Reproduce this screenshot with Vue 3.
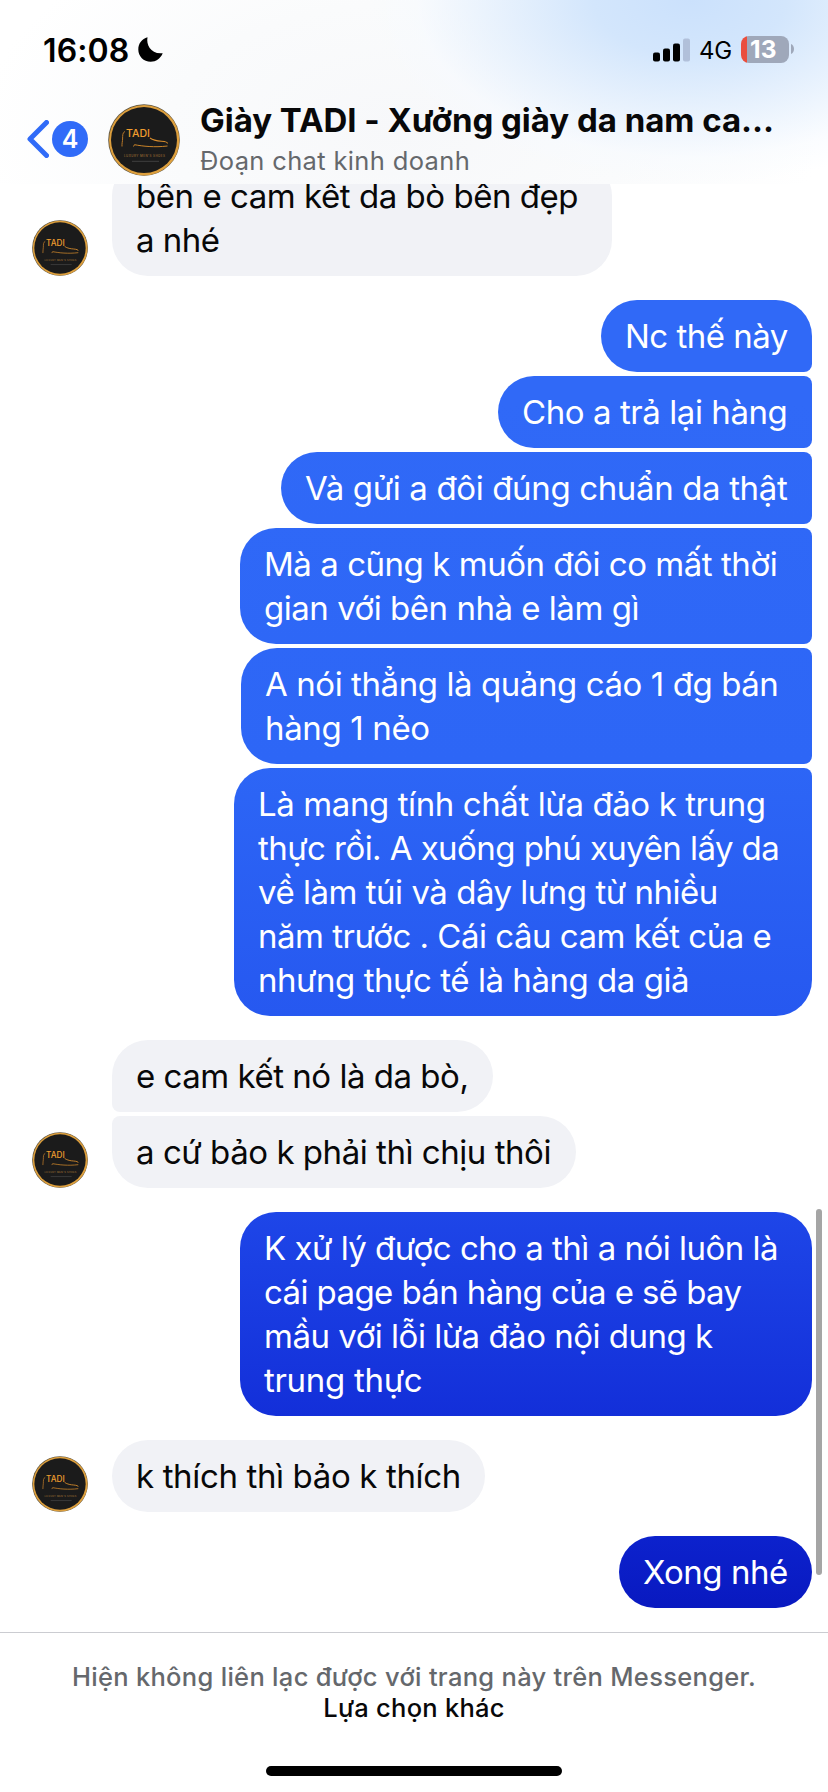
<script setup>
import { h } from 'vue'

// Each line carries its text and its letter spacing in pixels.
const groups = [
  {
    from: 'shop',
    messages: [{ width: 500, lines: [['bên e cam kết da bò bền đẹp', -0.46], ['a nhé', -0.5]] }]
  },
  {
    from: 'me',
    messages: [
      { width: 211, lines: [['Nc thế này', -0.5]] },
      { width: 314, lines: [['Cho a trả lại hàng', -0.43]] },
      { width: 531, lines: [['Và gửi a đôi đúng chuẩn da thật', -0.36]] },
      { width: 572, lines: [['Mà a cũng k muốn đôi co mất thời', -0.46], ['gian với bên nhà e làm gì', -0.48]] },
      { width: 571, lines: [['A nói thẳng là quảng cáo 1 đg bán', -0.42], ['hàng 1 nẻo', -0.35]] },
      {
        width: 578,
        lines: [
          ['Là mang tính chất lừa đảo k trung', -0.4],
          ['thực rồi. A xuống phú xuyên lấy da', -0.56],
          ['về làm túi và dây lưng từ nhiều', -0.48],
          ['năm trước . Cái câu cam kết của e', -0.5],
          ['nhưng thực tế là hàng da giả', -0.46]
        ]
      }
    ]
  },
  {
    from: 'shop',
    messages: [
      { width: 381, lines: [['e cam kết nó là da bò,', -0.48]] },
      { width: 464, lines: [['a cứ bảo k phải thì chịu thôi', -0.46]] }
    ]
  },
  {
    from: 'me',
    messages: [
      {
        width: 572,
        lines: [
          ['K xử lý được cho a thì a nói luôn là', -0.51],
          ['cái page bán hàng của e sẽ bay', -0.6],
          ['mầu với lỗi lừa đảo nội dung k', -0.5],
          ['trung thực', -0.3]
        ]
      }
    ]
  },
  { from: 'shop', messages: [{ width: 373, lines: [['k thích thì bảo k thích', -0.36]] }] },
  { from: 'me', messages: [{ width: 193, lines: [['Xong nhé', -0.5]] }] }
]

const ShopLogo = () =>
  h('svg', { viewBox: '0 0 72 72' }, [
    h('circle', { cx: 36, cy: 36, r: 35.8, fill: '#5b5340' }),
    h('circle', { cx: 36.2, cy: 36.2, r: 35.2, fill: '#dd9f3d' }),
    h('circle', { cx: 36, cy: 36, r: 33, fill: '#1b1b1b' }),
    h('text', {
      x: 18, y: 33, 'font-size': 10.6, 'font-weight': 500, fill: '#f09c2e',
      'font-family': 'Inter, sans-serif', textLength: 24, lengthAdjust: 'spacingAndGlyphs'
    }, 'TADI'),
    h('path', {
      d: 'M17 27.5c-2.6 1-2.3 4-2.4 7.500c0 2-.8 4.500-.6 7.500',
      fill: 'none', stroke: '#b87728', 'stroke-width': 1
    }),
    h('path', {
      d: 'M42 34c3.500 2.500 8 3 11.500 3.300c4 .3 6 1.200 6 2.200',
      fill: 'none', stroke: '#d78c2d', 'stroke-width': 1.1
    }),
    h('path', {
      d: 'M25.500 42.500l1-1.800c8 1.500 20 2.900 33 1.300',
      fill: 'none', stroke: '#c98329', 'stroke-width': 1
    }),
    h('text', {
      x: 16, y: 52.6, 'font-size': 3, 'font-weight': 600, fill: '#8a6030',
      'font-family': 'Inter, sans-serif', textLength: 41
    }, 'LUXURY MEN\'S SHOES'),
    h('path', { d: 'M24 57.300h27', stroke: '#4a4a4a', 'stroke-width': 0.8 })
  ])
</script>

<template>
  <main class="screen">
    <header class="top">
      <div class="status">
        <span class="clock">16:08</span>
        <svg class="moon" viewBox="0 0 25 25">
          <path d="M9.500.300C8 8 13 17.500 24.700 16.200C22.500 21.500 18 24.700 12.700 24.700C5.500 24.700.300 19.300.300 12.500C.300 6.500 4 1.800 9.500.300Z" />
        </svg>
        <svg class="signal" viewBox="0 0 37 24">
          <rect x="0" y="14.500" width="7" height="9" rx="2" />
          <rect x="10" y="10.500" width="7" height="13" rx="2" />
          <rect x="20" y="5.500" width="7" height="18" rx="2" />
          <rect class="dim" x="30" y=".500" width="7" height="23" rx="2" />
        </svg>
        <span class="network">4G</span>
        <span class="battery">13</span>
        <svg class="nub" viewBox="0 0 3 10"><path d="M0 0C4 1.500 4 8.500 0 10Z" /></svg>
      </div>
      <div class="bar">
        <svg class="back" viewBox="0 0 22 38">
          <path d="M19.500 2.500L3 19L19.500 35.500" />
        </svg>
        <span class="unread">4</span>
        <ShopLogo class="logo" />
        <div class="names">
          <h1>Giày TADI - Xưởng giày da nam ca...</h1>
          <p>Đoạn chat kinh doanh</p>
        </div>
      </div>
    </header>

    <section class="thread">
      <div v-for="(group, g) in groups" :key="g" class="group" :class="group.from">
        <ShopLogo v-if="group.from === 'shop'" class="avatar" />
        <div class="stack">
          <div
            v-for="(message, m) in group.messages"
            :key="m"
            class="bubble"
            :style="{ width: message.width + 'px' }"
          >
            <div
              v-for="[text, spacing] in message.lines"
              :key="text"
              :style="{ letterSpacing: spacing + 'px' }"
            >{{ text }}</div>
          </div>
        </div>
      </div>
      <i class="scrollbar"></i>
    </section>

    <footer class="notice">
      <p>Hiện không liên lạc được với trang này trên Messenger.</p>
      <strong>Lựa chọn khác</strong>
      <i class="home"></i>
    </footer>
  </main>
</template>

<style>
body {
  margin: 0;
  background: #fff;
}
</style>

<style scoped>
.screen {
  display: flex;
  flex-direction: column;
  width: 828px;
  height: 1792px;
  overflow: hidden;
  background: #fff;
  color: #080809;
  font-family: Inter, "Noto Sans", sans-serif;
}
.top {
  flex: none;
  height: 184px;
  background:
    radial-gradient(ellipse 320px 185px at 690px 0, #cbe1fc 0%, #d3e6fc 30%, #e3effdcc 60%, #f6faff80 85%, #ffffff00 100%),
    radial-gradient(ellipse 420px 230px at 400px 130px, #f7f8fa 0%, #fafbfc 55%, #fff 100%);
}
.status {
  display: flex;
  box-sizing: border-box;
  height: 100px;
  padding: 36px 34px 0 43px;
}
.clock {
  width: 95px;
  font-size: 32px;
  font-weight: 600;
  line-height: 29px;
  letter-spacing: 0.1px;
  color: #000;
}
.moon {
  width: 25px;
  height: 25px;
  margin-top: 1px;
}
.signal {
  width: 37px;
  height: 24px;
  margin: 1.5px 9px 0 auto;
}
.dim {
  fill: #b1c0da;
}
.network {
  width: 42px;
  font-size: 24px;
  line-height: 29px;
  letter-spacing: -0.2px;
  color: #000;
}
.battery {
  box-sizing: border-box;
  width: 48px;
  height: 27px;
  padding-left: 9px;
  border-radius: 8px;
  background: linear-gradient(90deg, #ea4e3d 6px, #9fa8ba 6px);
  color: #fff;
  font-size: 24.5px;
  font-weight: 700;
  line-height: 27px;
  letter-spacing: 0.3px;
}
.nub {
  width: 3px;
  height: 10px;
  margin: 8px 0 0 2px;
  fill: #9fa8ba;
}
.bar {
  display: flex;
  height: 84px;
  padding-left: 27px;
}
.back {
  width: 22px;
  height: 38px;
  margin: 20px 3px 0 0;
  fill: none;
  stroke: #306bf8;
  stroke-width: 5;
  stroke-linecap: round;
  stroke-linejoin: round;
}
.unread {
  width: 36px;
  height: 36px;
  margin: 21px 20px 0 0;
  border-radius: 50%;
  background: #306bf8;
  color: #fff;
  font-size: 25px;
  font-weight: 600;
  line-height: 37px;
  text-align: center;
}
.logo {
  width: 72px;
  height: 72px;
  margin: 4px 20px 0 0;
}
.names {
  white-space: nowrap;
}
h1 {
  margin: 0;
  font-size: 33px;
  font-weight: 700;
  line-height: 40px;
  letter-spacing: -0.03px;
}
p {
  margin: 0;
}
.names p {
  margin-top: 5px;
  font-size: 25.5px;
  line-height: 32px;
  letter-spacing: 0.35px;
  color: #65686c;
}
.thread {
  position: relative;
  display: flex;
  flex: none;
  flex-direction: column;
  justify-content: flex-end;
  gap: 24px;
  box-sizing: border-box;
  height: 1448px;
  padding: 0 16px 24px 32px;
  overflow: hidden;
}
.group {
  display: flex;
  align-items: flex-end;
  gap: 24px;
}
.me {
  justify-content: flex-end;
}
.avatar {
  width: 56px;
  height: 56px;
}
.stack {
  display: flex;
  flex-direction: column;
  gap: 4px;
}
.me .stack {
  align-items: flex-end;
}
.bubble {
  box-sizing: border-box;
  padding: 14px 24px;
  border-radius: 36px;
  font-size: 33px;
  line-height: 44px;
  white-space: nowrap;
}
.shop .bubble {
  background: #f1f2f6;
}
.me .bubble {
  color: #fff;
  background: linear-gradient(
    #3069f7 0,
    #3069f7 400px,
    #2d66f6 760px,
    #2658f0 1016px,
    #1e46e8 1212px,
    #132fd9 1416px,
    #0c22cd 1536px,
    #0919c0 1608px
  ) fixed;
}
.shop .bubble:not(:last-child) {
  border-bottom-left-radius: 8px;
}
.shop .bubble:not(:first-child) {
  border-top-left-radius: 8px;
}
.me .bubble:not(:last-child) {
  border-bottom-right-radius: 8px;
}
.me .bubble:not(:first-child) {
  border-top-right-radius: 8px;
}
.scrollbar {
  position: absolute;
  top: 1025px;
  right: 6px;
  width: 6px;
  height: 366px;
  border-radius: 3px;
  background: #a5a5a5;
}
.notice {
  display: flex;
  flex: 1;
  flex-direction: column;
  align-items: center;
  padding-top: 28px;
  border-top: 1px solid #cbccd1;
  font-size: 25.5px;
  line-height: 31px;
  white-space: nowrap;
}
.notice p {
  font-weight: 550;
  letter-spacing: 0.3px;
  color: #65686c;
}
.notice strong {
  font-weight: 550;
  letter-spacing: 0.25px;
}
.home {
  width: 296px;
  height: 10px;
  margin: auto 0 16px;
  border-radius: 5px;
  background: #000;
}
</style>
